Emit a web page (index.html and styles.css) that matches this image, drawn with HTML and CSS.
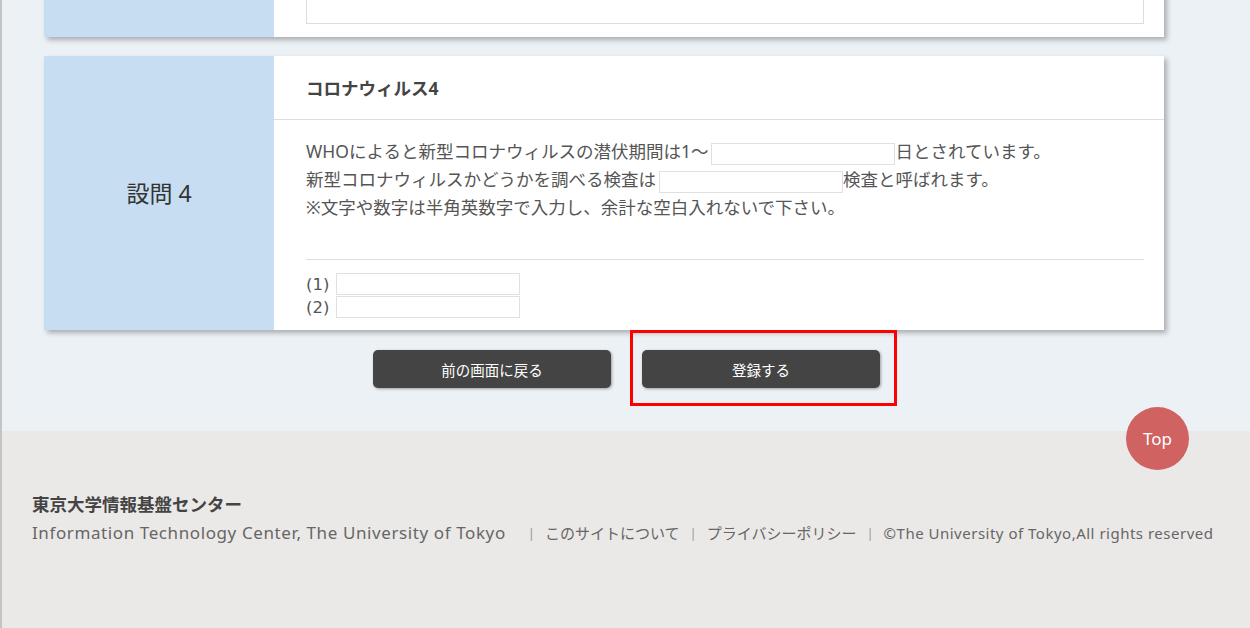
FILE: index.html
```html
<!DOCTYPE html>
<html lang="ja">
<head>
<meta charset="utf-8">
<title>設問 4</title>
<link rel="stylesheet" href="styles.css">
</head>
<body>
<div class="page">
  <main class="main">
    <section class="card card-prev">
      <div class="card-label"></div>
      <div class="card-body">
        <div class="prev-box"></div>
      </div>
    </section>
    <section class="card">
      <div class="card-label">設問 4</div>
      <div class="card-body">
        <h2 class="q-title">コロナウィルス4</h2>
        <div class="q-text">
          <p>WHOによると新型コロナウィルスの潜伏期間は1～<input class="blank" type="text">日とされています。</p>
          <p>新型コロナウィルスかどうかを調べる検査は<input class="blank" type="text">検査と呼ばれます。</p>
          <p>※文字や数字は半角英数字で入力し、余計な空白入れないで下さい。</p>
        </div>
        <div class="answers">
          <div class="answer-row"><span class="answer-no">(1)</span><input class="blank" type="text"></div>
          <div class="answer-row"><span class="answer-no">(2)</span><input class="blank" type="text"></div>
        </div>
      </div>
    </section>
    <div class="actions">
      <button class="btn" type="button">前の画面に戻る</button>
      <div class="btn-wrap">
        <button class="btn" type="button">登録する</button>
        <div class="highlight"></div>
      </div>
    </div>
  </main>
  <footer class="footer">
    <a class="to-top" href="#">Top</a>
    <div class="footer-org">東京大学情報基盤センター</div>
    <div class="footer-line">
      <span class="footer-en">Information Technology Center, The University of Tokyo</span>
      <span class="sep">|</span><a class="footer-link" href="#">このサイトについて</a>
      <span class="sep">|</span><a class="footer-link" href="#">プライバシーポリシー</a>
      <span class="sep">|</span><span class="footer-copy">©The University of Tokyo,All rights reserved</span>
    </div>
  </footer>
</div>
</body>
</html>
```
FILE: styles.css
```css
* { box-sizing: border-box; }
html, body { margin: 0; padding: 0; }
body {
  font-family: "Noto Sans", "Noto Sans CJK JP", sans-serif;
  color: #555;
  overflow: hidden;
  height: 628px;
}
.page {
  border-left: 2px solid #c4c4c4;
  min-height: 628px;
  display: flex;
  flex-direction: column;
  background: #ebe9e7;
}
.main {
  background: #ecf1f6;
  padding: 0 86px 0 42px;
  display: flex;
  flex-direction: column;
  gap: 19px;
}
.card {
  display: flex;
  background: #fff;
  box-shadow: 3px 3px 5px rgba(0, 0, 0, 0.28);
}
.card-prev {
  margin-top: -40px;
  height: 77px;
}
.card-label {
  width: 230px;
  flex: none;
  background: #c7ddf1;
  display: flex;
  align-items: center;
  justify-content: center;
  font-size: 23px;
  color: #333;
  padding-bottom: 3px;
}
.card-body {
  flex: 1;
  display: flex;
  flex-direction: column;
}
.card-prev .card-body {
  padding: 0 20px 13px 32px;
  justify-content: flex-end;
}
.prev-box {
  height: 64px;
  border: 1px solid #ddd;
  border-top: none;
}
.q-title {
  margin: 0;
  height: 64px;
  padding: 0 32px;
  display: flex;
  align-items: center;
  font-size: 17.5px;
  font-weight: bold;
  color: #444;
  border-bottom: 1px solid #dedede;
}
.q-text {
  margin: 0 20px 0 32px;
  padding: 17px 0 38px;
  border-bottom: 1px solid #dedede;
  font-size: 17.5px;
  line-height: 28px;
}
.q-text p { margin: 0; }
.blank {
  width: 184px;
  height: 22px;
  border: 1px solid #e0e0e0;
  margin: 0;
  padding: 0;
  vertical-align: -3px;
  background: #fff;
  font: inherit;
}
.q-text .blank { margin-left: 3px; }
.answers {
  padding: 13px 20px 12px 32px;
  display: flex;
  flex-direction: column;
  gap: 1px;
}
.answer-row {
  display: flex;
  align-items: center;
  gap: 7px;
  font-family: "DejaVu Sans", sans-serif;
  font-size: 16.5px;
  height: 22px;
}
.actions {
  display: flex;
  justify-content: center;
  gap: 31px;
  padding: 1px 0 43px 0;
  margin-right: -45px;
}
.btn {
  width: 238px;
  height: 38px;
  border: none;
  border-radius: 5px;
  background: #444;
  color: #fff;
  font-family: "Noto Sans CJK JP", sans-serif;
  font-size: 14.5px;
  box-shadow: 1px 1px 3px rgba(0, 0, 0, 0.35);
}
.btn-wrap { position: relative; }
.highlight {
  position: absolute;
  left: -12px;
  top: -20px;
  right: -17px;
  bottom: -18px;
  border: 3px solid #f00;
  pointer-events: none;
}
.footer {
  position: relative;
  flex: 1;
  background: #ebe9e7;
  padding: 61px 0 0 30px;
}
.to-top {
  position: absolute;
  top: -24px;
  right: 61px;
  width: 63px;
  height: 63px;
  border-radius: 50%;
  background: #d06262;
  color: #fff;
  text-decoration: none;
  font-size: 17px;
  display: flex;
  align-items: center;
  justify-content: center;
}
.footer-org {
  font-family: "Noto Sans CJK JP", sans-serif;
  font-weight: bold;
  font-size: 17.5px;
  color: #444;
  line-height: 24px;
}
.footer-line {
  display: flex;
  align-items: center;
  margin-top: 4px;
  color: #666;
  font-size: 15px;
  line-height: 26px;
}
.footer-en { font-size: 17px; letter-spacing: 0.6px; margin-right: 12px; }
.sep { color: #999; margin: 0 10px; font-size: 13px; }
.footer-link { color: #666; text-decoration: none; }
.footer-copy { color: #666; letter-spacing: 0.5px; }
```
